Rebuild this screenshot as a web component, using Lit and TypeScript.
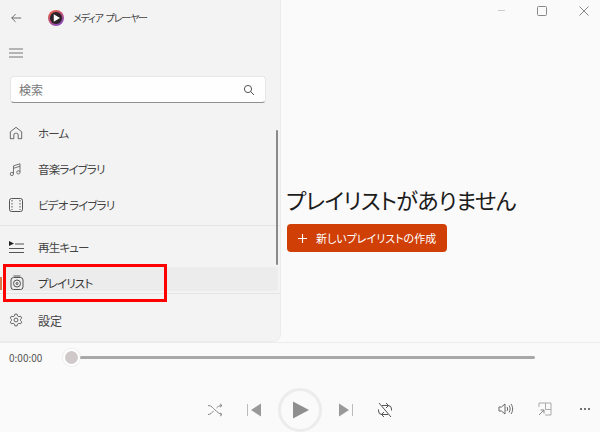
import { LitElement, html, css, svg } from "lit";
import { customElement } from "lit/decorators.js";

const S = (w: number, h: number, content: unknown, rw = w, rh = h) =>
  html`<svg class="ic" width=${rw} height=${rh} viewBox="0 0 ${w} ${h}" fill="none" stroke="currentColor" stroke-width="1">${content}</svg>`;

const icons = {
  back: S(14, 14, svg`<path d="M13 7H2M6.500 2.500 2 7l4.500 4.500"/>`, 12, 12),
  menu: S(14, 12, svg`<path d="M0 2h14M0 6h14M0 10h14" stroke="#777"/>`),
  search: S(12, 12, svg`<circle cx="5" cy="5" r="3.600"/><path d="m7.600 7.600 3.400 3.400"/>`),
  home: S(16, 16, svg`<path d="M1.500 14.500V6.600L8 1.500l6.500 5.100v7.900h-4v-4.200a2 2 0 0 0-2-2h-1a2 2 0 0 0-2 2v4.200z"/>`, 14, 14),
  music: S(16, 18, svg`<path d="M5.500 14V4.500l8-2.500v10M5.500 7.500l8-2.500"/><circle cx="3.500" cy="14.500" r="2"/><circle cx="11.500" cy="12.500" r="2"/>`, 13, 15),
  video: S(14, 14, svg`<rect x=".5" y=".5" width="13" height="13" rx="2"/><path d="M3 2v10M11 2v10" stroke-dasharray="1.500 1.500"/>`),
  queue: S(15, 12, svg`<path d="M0 0v5l5-2.500z" fill="#222" stroke="none"/><path d="M6 3h9M0 7.500h15M0 11.500h15" stroke="#555"/>`),
  playlist: S(14, 16, svg`<rect x="1" y="2.500" width="12" height="12" rx="2.500"/><path d="M3.500 1h7"/><circle cx="7" cy="8.500" r="3.500"/><circle cx="7" cy="8.500" r="1"/>`),
  gear: S(16, 16, svg`<path d="M6.700 1.300h2.600l.4 2 1.600.9 2-.6 1.300 2.300-1.500 1.400v1.400l1.500 1.400-1.300 2.300-2-.6-1.600.9-.4 2H6.700l-.4-2-1.600-.9-2 .6-1.300-2.300 1.500-1.400V7.300L1.400 5.900l1.300-2.300 2 .6 1.600-.9z"/><circle cx="8" cy="8" r="2.200"/>`, 14, 14),
  plus: S(9, 9, svg`<path d="M4.500 0v9M0 4.500h9" stroke-width="1.100"/>`),
  shuffle: S(16, 14, svg`<path d="M1 2.500c4 0 5 3 7 4.500s4 4 7 4.500M1 11.500c3 0 4-2 5.500-3.500M9.500 5c1.200-1.300 3-2.500 5.500-2.500M13 .8l2 1.700-2 1.700M13 9.800l2 1.700-2 1.700"/>`),
  prev: S(14, 14, svg`<path d="M.5 1v12" stroke="#bbb"/><path d="M14 .5v13L4 7z" fill="#999" stroke="none"/>`),
  next: S(14, 14, svg`<path d="M13.500 1v12" stroke="#bbb"/><path d="M0 .5v13L10 7z" fill="#999" stroke="none"/>`),
  play: S(16, 18, svg`<path d="M0 .5v17L16 9z" fill="#8f8f8f" stroke="none"/>`),
  repeat: S(16, 16, svg`<path stroke="#555" d="M2 1l12 14M5 3.500h6a3.500 3.500 0 0 1 3.500 3.500v1.500M11 12.500H5A3.500 3.500 0 0 1 1.500 9V7.500M9 1l2.500 2.500L9 6M7 10l-2.500 2.500L7 15"/>`),
  volume: S(16, 14, svg`<path d="M1 5v4h2.500L7 12V2L3.500 5zM9 5c.8 1.200.8 2.800 0 4M11 3.500c1.500 2 1.500 5 0 7M13 2c2.200 3 2.200 7 0 10"/>`),
  mini: S(14, 14, svg`<path d="M1 5V1h12v12H7M7.500 1v6.500H13" stroke="#aaa"/><path d="M1 13l5-5M2.500 8H6v3.500" stroke="#888"/>`),
  more: S(12, 4, svg`<circle cx="2" cy="2" r="1" fill="#444" stroke="none"/><circle cx="6" cy="2" r="1" fill="#444" stroke="none"/><circle cx="10" cy="2" r="1" fill="#444" stroke="none"/>`),
  max: S(10, 10, svg`<rect x=".5" y=".5" width="9" height="9" rx="1"/>`),
  close: S(10, 10, svg`<path d="M.5.5l9 9M9.500.5l-9 9"/>`),
  logo: html`<svg class="ic" width="16" height="16" viewBox="0 0 18 18"><defs><linearGradient id="lg" x1="0" y1="0" x2="0.600" y2="1"><stop offset="0" stop-color="#e8683a"/><stop offset=".55" stop-color="#c04f7a"/><stop offset="1" stop-color="#8a4fc0"/></linearGradient></defs><circle cx="9" cy="9" r="9" fill="url(#lg)"/><circle cx="9" cy="9" r="6.800" fill="#2a2226"/><path d="M6.500 4.800v8.400L13.500 9z" fill="#fff"/></svg>`,
};

@customElement("app-root")
export class AppRoot extends LitElement {
  static styles = css`
    :host {
      display: block;
      width: 600px;
      height: 432px;
      position: relative;
      overflow: hidden;
      background: #fafafa;
      font-family: "Noto Sans CJK JP", "Noto Sans", sans-serif;
      font-feature-settings: "palt";
      color: #333;
      font-size: 12px;
    }
    .ic { display: block; flex: none; }
    .top { display: flex; height: 342px; }
    .side {
      width: 281px;
      box-sizing: border-box;
      background: #f3f3f3;
      border-right: 1px solid #ebebeb;
      border-bottom: 1px solid #ebebeb;
      border-bottom-right-radius: 8px;
      display: flex;
      flex-direction: column;
      position: relative;
    }
    .title { height: 35px; display: flex; align-items: center; flex: none; }
    .back { margin-left: 10px; width: 38px; color: #555; }
    .app { margin-left: 9px; font-size: 10px; letter-spacing: -1.2px; word-spacing: 2px; color: #444; white-space: nowrap; }
    .ham { height: 36px; display: flex; align-items: center; padding-left: 9px; flex: none; }
    .search {
      margin: 5px 14px 0 10px;
      height: 27px;
      box-sizing: border-box;
      background: #fefefe;
      border: 1px solid #e6e6e6;
      border-bottom-color: #8f8f8f;
      border-radius: 4px;
      display: flex;
      align-items: center;
      justify-content: space-between;
      padding: 0 10px 0 8px;
      color: #777;
      font-size: 12px;
      flex: none;
    }
    .search .ic { color: #555; }
    .nav { margin-top: 12px; display: flex; flex-direction: column; }
    .item {
      height: 36px;
      display: flex;
      align-items: center;
      flex: none;
      color: #444;
      white-space: nowrap;
      font-size: 11.5px;
      letter-spacing: -0.85px;
    }
    .iw { width: 38px; padding-left: 9px; box-sizing: border-box; color: #555; flex: none; }
    .item.sel {
      height: 24px;
      margin: 2px 2px 0 3px;
      background: #ececec;
      border-radius: 3px;
      align-items: flex-end;
      color: #333;
    }
    .item.sel .iw { width: 35px; padding-left: 7px; }
    .sep { height: 1px; background: #e4e4e4; flex: none; }
    .sep.a { margin-top: 2px; }
    .item.q { margin-top: 3px; }
    .sep.b { margin-top: 2px; }
    .item.s { margin-top: 8px; font-size: 12px; letter-spacing: 0; }
    .thumb {
      position: absolute;
      left: 276px;
      top: 130px;
      width: 2px;
      height: 135px;
      background: #8a8a8a;
      border-radius: 1px;
    }
    .accent {
      position: absolute;
      left: 0;
      top: 277px;
      width: 2px;
      height: 13px;
      background: #d9794f;
    }
    .main { flex: 1; display: flex; flex-direction: column; }
    .winbar { display: flex; justify-content: flex-end; align-items: center; height: 21px; padding-right: 11px; gap: 32px; color: #888; }
    .winbar .dash { width: 7px; height: 1px; background: #ccc; }
    .content { padding: 164px 0 0 5px; }
    h1 { margin: 0; font-weight: 400; font-size: 22px; letter-spacing: -0.55px; line-height: 28px; color: #1c1c1c; white-space: nowrap; }
    .cta {
      margin: 11px 0 0 1px;
      width: 160px;
      height: 28px;
      border-radius: 4px;
      background: #cf3f06;
      color: #fff;
      display: flex;
      align-items: center;
      gap: 9px;
      padding-left: 11px;
      box-sizing: border-box;
      font-size: 11px;
      white-space: nowrap;
    }
    .player { height: 90px; border-top: 1px solid #ececec; box-sizing: border-box; display: flex; flex-direction: column; }
    .seek { display: flex; align-items: center; height: 28px; padding-left: 9px; flex: none; }
    .time { width: 54px; font-size: 10px; color: #555; flex: none; font-feature-settings: normal; }
    .knob { width: 17px; height: 17px; border-radius: 50%; background: #cfc9c9; border: 2px solid #fff; box-sizing: border-box; box-shadow: 0 0 0 1px #eee; flex: none; }
    .track { width: 455px; height: 3px; background: #a8a8a8; border-radius: 2px; }
    .controls { position: relative; flex: 1; display: flex; align-items: center; justify-content: center; padding-top: 16px; }
    .center { display: flex; align-items: center; margin-left: -1px; }
    .center .ic { color: #888; }
    .w24 { width: 24px; }
    .w17 { width: 17px; }
    .pbtn { width: 44px; height: 44px; border: 3px solid #ececec; border-radius: 50%; box-sizing: border-box; display: flex; align-items: center; justify-content: center; padding-left: 2px; }
    .right { position: absolute; right: 9px; top: 31px; display: flex; align-items: center; gap: 24px; color: #666; }
    .right .ic:last-child { margin-left: 3px; }
    .box { position: absolute; left: 3px; top: 264px; width: 164px; height: 38px; border: 3px solid #f00; box-sizing: border-box; pointer-events: none; }
  `;

  render() {
    return html`
      <div class="top">
        <aside class="side">
          <div class="title"><span class="back">${icons.back}</span>${icons.logo}<span class="app">メディア プレーヤー</span></div>
          <div class="ham">${icons.menu}</div>
          <div class="search"><span>検索</span>${icons.search}</div>
          <nav class="nav">
            <div class="item"><span class="iw">${icons.home}</span>ホーム</div>
            <div class="item"><span class="iw">${icons.music}</span>音楽ライブラリ</div>
            <div class="item"><span class="iw">${icons.video}</span>ビデオ ライブラリ</div>
            <div class="sep a"></div>
            <div class="item q"><span class="iw">${icons.queue}</span>再生キュー</div>
            <div class="item sel"><span class="iw">${icons.playlist}</span>プレイリスト</div>
            <div class="sep b"></div>
            <div class="item s"><span class="iw">${icons.gear}</span>設定</div>
          </nav>
          <div class="thumb"></div>
          <div class="accent"></div>
        </aside>
        <main class="main">
          <div class="winbar"><span class="dash"></span>${icons.max}${icons.close}</div>
          <div class="content">
            <h1>プレイリストがありません</h1>
            <div class="cta">${icons.plus}<span>新しいプレイリストの作成</span></div>
          </div>
        </main>
      </div>
      <footer class="player">
        <div class="seek"><span class="time">0:00:00</span><span class="knob"></span><span class="track"></span></div>
        <div class="controls">
          <div class="center">
            ${icons.shuffle}<span class="w24"></span>${icons.prev}<span class="w17"></span>
            <span class="pbtn">${icons.play}</span>
            <span class="w17"></span>${icons.next}<span class="w24"></span>${icons.repeat}
          </div>
          <div class="right">${icons.volume}${icons.mini}${icons.more}</div>
        </div>
      </footer>
      <div class="box"></div>
    `;
  }
}
